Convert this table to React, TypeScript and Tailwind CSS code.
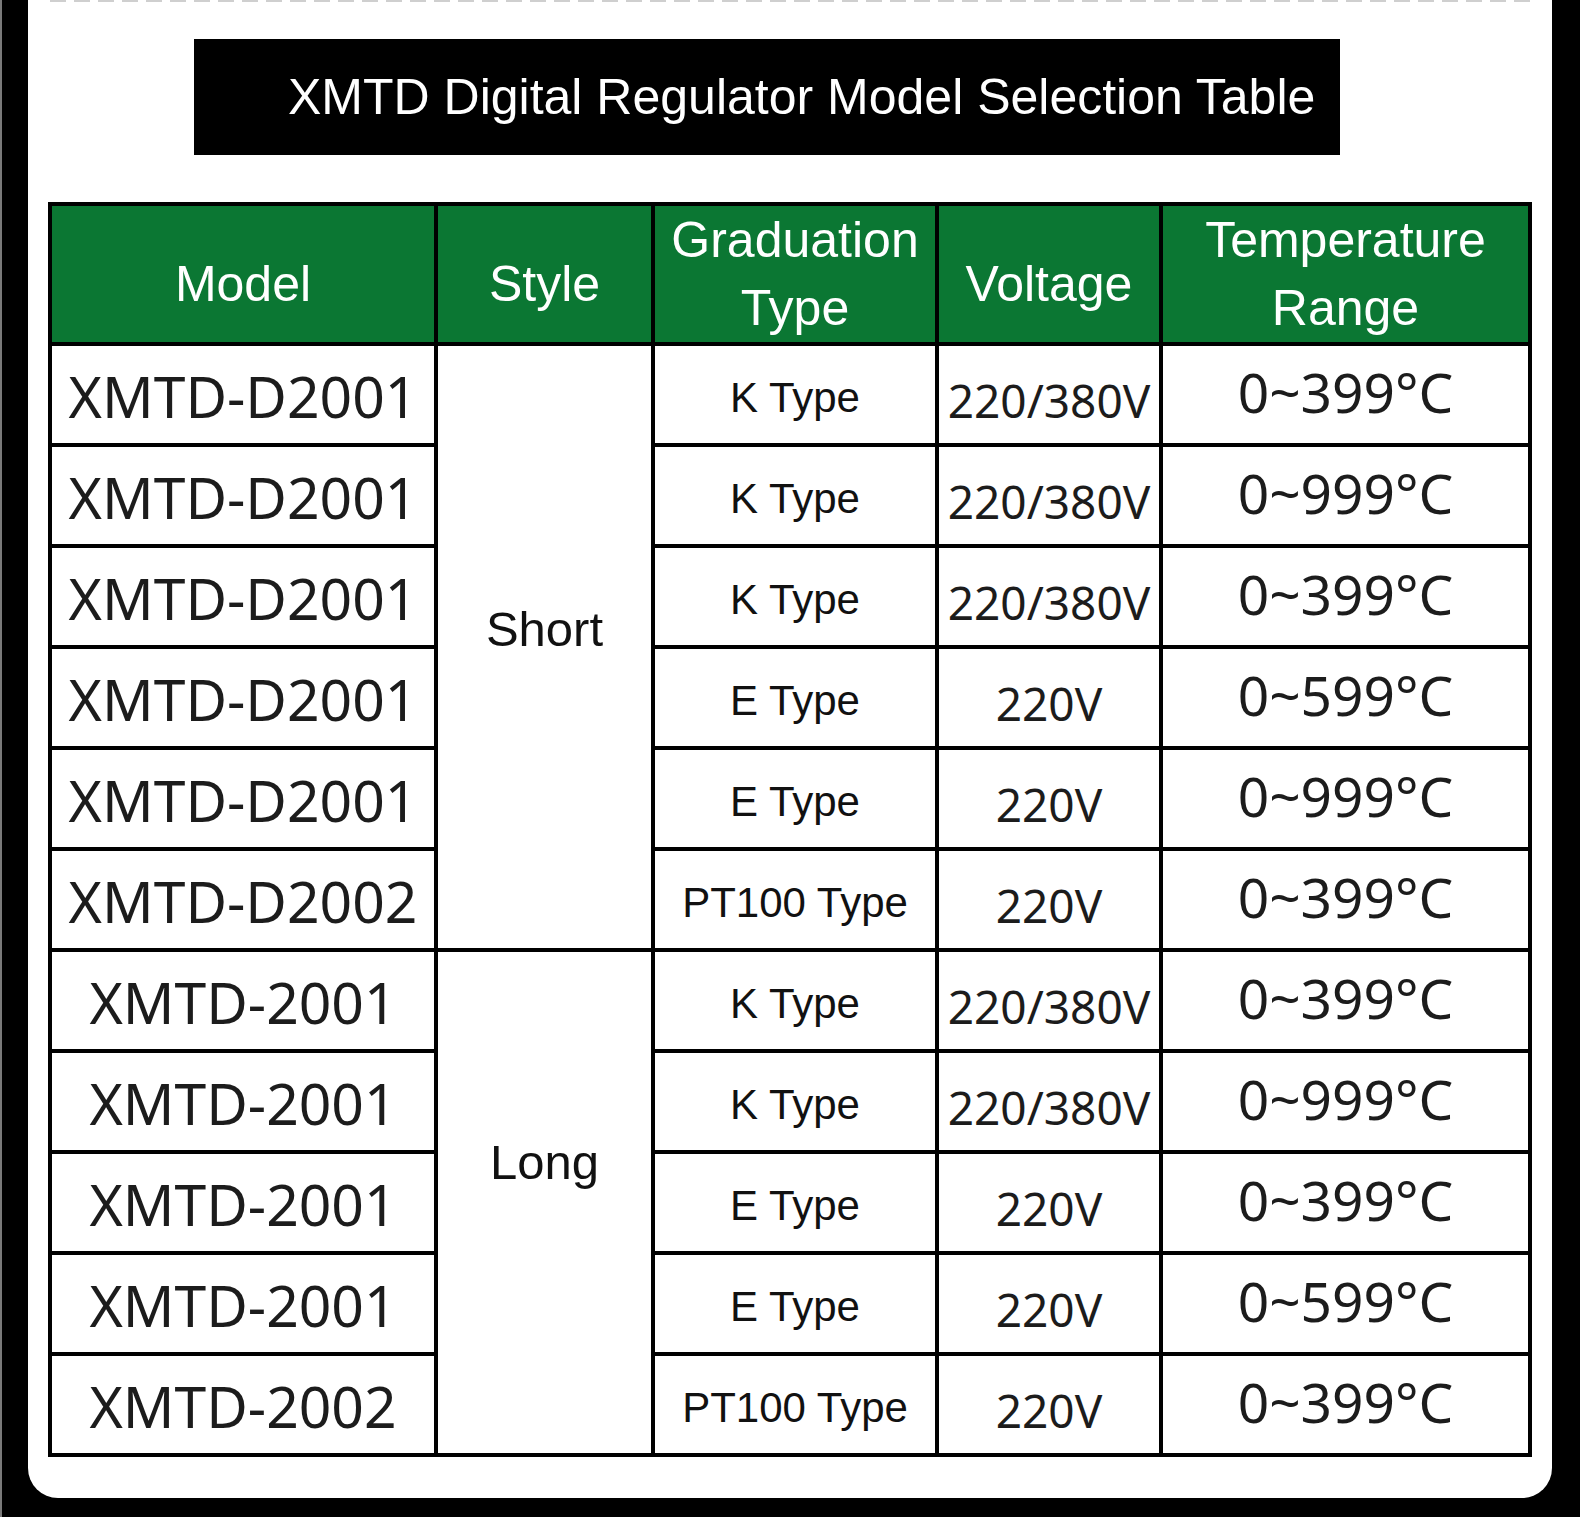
import React from "react";

type Row = {
  model: string;
  grad: string;
  volt: string;
  temp: string;
};

const shortRows: Row[] = [
  { model: "XMTD-D2001", grad: "K Type", volt: "220/380V", temp: "0~399°C" },
  { model: "XMTD-D2001", grad: "K Type", volt: "220/380V", temp: "0~999°C" },
  { model: "XMTD-D2001", grad: "K Type", volt: "220/380V", temp: "0~399°C" },
  { model: "XMTD-D2001", grad: "E Type", volt: "220V", temp: "0~599°C" },
  { model: "XMTD-D2001", grad: "E Type", volt: "220V", temp: "0~999°C" },
  { model: "XMTD-D2002", grad: "PT100 Type", volt: "220V", temp: "0~399°C" },
];

const longRows: Row[] = [
  { model: "XMTD-2001", grad: "K Type", volt: "220/380V", temp: "0~399°C" },
  { model: "XMTD-2001", grad: "K Type", volt: "220/380V", temp: "0~999°C" },
  { model: "XMTD-2001", grad: "E Type", volt: "220V", temp: "0~399°C" },
  { model: "XMTD-2001", grad: "E Type", volt: "220V", temp: "0~599°C" },
  { model: "XMTD-2002", grad: "PT100 Type", volt: "220V", temp: "0~399°C" },
];

const arial = "font-['Liberation_Sans',Arial,sans-serif]";
const noto = "font-['Noto_Sans',sans-serif]";

function ModelCell({ row }: { row: Row }) {
  return (
    <td className={`border-[4px] border-black text-center text-[57px] leading-none text-[#1c1c1c] pt-[4px] ${noto}`}>
      {row.model}
    </td>
  );
}

function RightCells({ row }: { row: Row }) {
  return (
    <>
      <td className={`border-[4px] border-black text-center text-[42px] leading-none text-[#111] pt-[6px] ${arial}`}>
        {row.grad}
      </td>
      <td className={`border-[4px] border-black text-center text-[46px] leading-none text-[#1c1c1c] pt-[10px] ${noto}`}>
        {row.volt}
      </td>
      <td className={`border-[4px] border-black text-center text-[55px] leading-none text-[#1c1c1c] pb-[6px] ${noto}`}>
        {row.temp}
      </td>
    </>
  );
}

function Group({ label, rows, pad }: { label: string; rows: Row[]; pad: string }) {
  return (
    <>
      {rows.map((row, i) => (
        <tr key={i} className="h-[101px]">
          <ModelCell row={row} />
          {i === 0 && (
            <td
              rowSpan={rows.length}
              className={`border-[4px] border-black text-center text-[49px] leading-none text-[#111] ${pad} ${arial}`}
            >
              {label}
            </td>
          )}
          <RightCells row={row} />
        </tr>
      ))}
    </>
  );
}

export default function App() {
  return (
    <div className="w-[1580px] h-[1517px] bg-black overflow-hidden border-l-2 border-[#7a7a7a]">
      <div className="ml-[26px] w-[1524px] h-[1498px] bg-white rounded-b-[30px] flex flex-col">
        <div className="ml-[22px] w-[1480px] h-[2px] bg-[repeating-linear-gradient(90deg,#cfcfcf_0_16px,transparent_16px_24px)]" />

        <div
          className={`mt-[37px] ml-[166px] w-[1146px] h-[116px] bg-black flex items-center pl-[94px] text-white text-[50px] ${arial}`}
        >
          XMTD Digital Regulator Model Selection Table
        </div>

        <table className="mt-[47px] ml-[20px] w-[1480px] table-fixed border-collapse border-[4px] border-black">
          <colgroup>
            <col className="w-[386px]" />
            <col className="w-[217px]" />
            <col className="w-[284px]" />
            <col className="w-[224px]" />
            <col className="w-[369px]" />
          </colgroup>
          <thead>
            <tr className={`h-[139px] bg-[#0b7733] text-white text-[50px] ${arial}`}>
              <th className="border-[4px] border-black font-normal leading-none pt-[20px]">Model</th>
              <th className="border-[4px] border-black font-normal leading-none pt-[20px]">Style</th>
              <th className="border-[4px] border-black font-normal leading-[68px]">
                Graduation
                <br />
                Type
              </th>
              <th className="border-[4px] border-black font-normal leading-none pt-[20px]">Voltage</th>
              <th className="border-[4px] border-black font-normal leading-[68px]">
                Temperature
                <br />
                Range
              </th>
            </tr>
          </thead>
          <tbody>
            <Group label="Short" rows={shortRows} pad="pb-[36px]" />
            <Group label="Long" rows={longRows} pad="pb-[80px]" />
          </tbody>
        </table>
      </div>
    </div>
  );
}
